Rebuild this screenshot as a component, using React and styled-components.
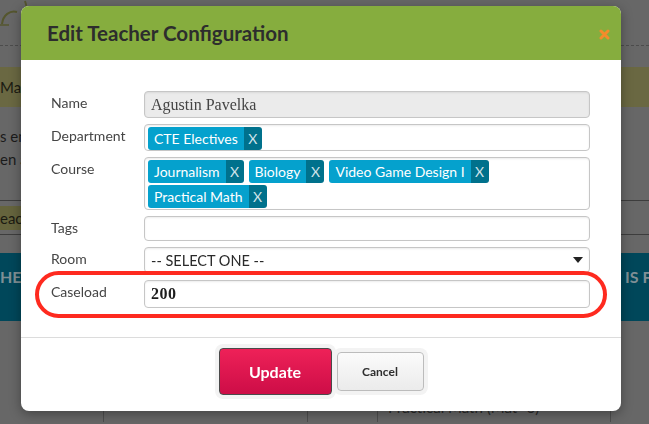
import React from "react";
import styled, { createGlobalStyle } from "styled-components";

const GlobalStyle = createGlobalStyle`
    body {
        margin: 0;
        background: #676767;
        font-family: Lato, "Liberation Sans", sans-serif;
        overflow: hidden;
    }
`

const courses = ["Journalism", "Biology", "Video Game Design I", "Practical Math"]

const Tag = ({ children }) => (
    <TagBox>
        <span className="txt">{children}</span>
        <span className="x">X</span>
    </TagBox>
)

const App = () => {
    return (
        <>
            <GlobalStyle />
            <Page>
                <TopBar>
                    <svg width="30" height="30" viewBox="0 0 30 30">
                        <path d="M2 24 C 3 15, 10 10, 17 12" fill="none" stroke="#55562e" strokeWidth="2" />
                        <path d="M25 1 C 27 6, 27 10, 25 15" fill="none" stroke="#55562e" strokeWidth="2" />
                        <path d="M0 25 L 9 25" fill="none" stroke="#55562e" strokeWidth="1.5" />
                    </svg>
                </TopBar>
                <OliveBand>Mast</OliveBand>
                <Para>s en</Para>
                <Para>en a</Para>
                <ToolRow>
                    <OliveButton>each</OliveButton>
                </ToolRow>
                <TealBand>
                    <span>HER</span>
                    <span>IS F</span>
                </TealBand>
                <Table>
                    <div />
                    <div />
                    <div />
                    <div className="cell">Practical Math (Mat- 6)</div>
                    <div />
                </Table>
            </Page>

            <Modal>
                <Header>
                    <h2>Edit Teacher Configuration</h2>
                    <svg width="11" height="11" viewBox="0 0 11 11">
                        <path d="M2 2 L9 9 M9 2 L2 9" stroke="#f58b2b" strokeWidth="3" strokeLinecap="round" />
                    </svg>
                </Header>
                <Body>
                    <Row>
                        <Label>Name</Label>
                        <Field $h={27} $bg="#ebebeb">
                            <span className="serif">Agustin Pavelka</span>
                        </Field>
                    </Row>
                    <Row>
                        <Label>Department</Label>
                        <TagField $h={27}>
                            <Tag>CTE Electives</Tag>
                        </TagField>
                    </Row>
                    <Row>
                        <Label>Course</Label>
                        <TagField $h={53}>
                            {courses.map(c => <Tag key={c}>{c}</Tag>)}
                        </TagField>
                    </Row>
                    <Row>
                        <Label>Tags</Label>
                        <Field $h={25} />
                    </Row>
                    <Row>
                        <Label>Room</Label>
                        <Select $h={26}>
                            <span>-- SELECT ONE --</span>
                            <svg width="10" height="6" viewBox="0 0 10 6">
                                <path d="M0 0 L10 0 L5 6 Z" fill="#222" />
                            </svg>
                        </Select>
                    </Row>
                    <Highlight>
                        <Label>Caseload</Label>
                        <Field $h={28}>
                            <span className="num">200</span>
                        </Field>
                    </Highlight>
                </Body>
                <Footer>
                    <UpdateButton>Update</UpdateButton>
                    <CancelButton>Cancel</CancelButton>
                </Footer>
            </Modal>
        </>
    )
}

const Page = styled.div`
    width: 649px;
    height: 424px;
    color: #1e1e1e;
    font-size: 14px;
`

const TopBar = styled.div`
    height: 46px;
    border-bottom: 1px dashed #4c4c4c;
    box-sizing: border-box;
    svg {
        display: block;
    }
`

const OliveBand = styled.div`
    margin-top: 21px;
    height: 40px;
    background: #6a6842;
    display: flex;
    align-items: center;
    font-size: 15px;
    color: #1b1b12;
`

const Para = styled.div`
    line-height: 15px;
    font-size: 15px;
    color: #1b1b1b;
    margin-top: 8px;
    ${OliveBand} + & {
        margin-top: 22px;
    }
`

const ToolRow = styled.div`
    margin-top: 33px;
    height: 35px;
    border-top: 1px solid #3d3d3d;
    border-bottom: 1px solid #3d3d3d;
    box-sizing: border-box;
    display: flex;
    align-items: center;
`

const OliveButton = styled.div`
    height: 24px;
    width: 60px;
    background: #65643d;
    display: flex;
    align-items: center;
    font-size: 15px;
    color: #1b1b12;
`

const TealBand = styled.div`
    margin-top: 18px;
    height: 68px;
    background: #00475a;
    display: grid;
    grid-template-columns: 625px 1fr;
    align-items: start;
    padding-top: 14px;
    box-sizing: border-box;
    font-weight: 700;
    font-size: 16px;
    color: #7f8f95;
    white-space: nowrap;
`

const Table = styled.div`
    height: 101px;
    display: grid;
    grid-template-columns: 103px 204px 70px 233px 1fr;
    div {
        border-left: 1px solid #4e4e4e;
    }
    div:first-child {
        border-left: none;
    }
    .cell {
        display: flex;
        align-items: flex-end;
        padding: 0 0 6px 10px;
        font-size: 15px;
        color: #2a2a2a;
        white-space: nowrap;
    }
`

const Modal = styled.div`
    position: fixed;
    top: 6px;
    left: 21px;
    width: 600px;
    background: #fff;
    border-radius: 8px;
    overflow: hidden;
    box-shadow: 0 3px 12px rgba(0, 0, 0, 0.35);
`

const Header = styled.div`
    height: 54px;
    background: #86ad3e;
    display: flex;
    align-items: center;
    justify-content: space-between;
    padding: 0 11px 0 26px;
    h2 {
        margin: 0;
        font-size: 20.5px;
        font-weight: 700;
        color: #2d2d2d;
    }
    svg {
        margin-top: 2px;
    }
`

const Body = styled.div`
    padding: 31px 31px 19px 30px;
    display: flex;
    flex-direction: column;
    gap: 6px;
`

const Row = styled.div`
    display: grid;
    grid-template-columns: 93px 1fr;
    align-items: start;
`

const Label = styled.div`
    font-size: 14px;
    line-height: 23px;
    color: #454545;
`

const Field = styled.div`
    height: ${p => p.$h}px;
    box-sizing: border-box;
    border: 1px solid #c6c6c6;
    border-radius: 4px;
    background: ${p => p.$bg || "#fff"};
    box-shadow: inset 0 1px 2px rgba(0, 0, 0, 0.08);
    display: flex;
    align-items: center;
    padding: 0 6px;
    .serif {
        font-family: "Liberation Serif", serif;
        font-size: 16px;
        color: #444;
    }
    .num {
        font-family: "Liberation Serif", serif;
        font-weight: 700;
        font-size: 16px;
        color: #1d1d1d;
        letter-spacing: 0.5px;
    }
`

const TagField = styled(Field)`
    align-items: flex-start;
    align-content: flex-start;
    flex-wrap: wrap;
    gap: 2px 5px;
    padding: 2px 3px;
`

const TagBox = styled.div`
    height: 23px;
    display: flex;
    border-radius: 3px;
    overflow: hidden;
    font-size: 14px;
    color: #fff;
    .txt {
        background: #05a1cd;
        padding: 0 6px;
        line-height: 23px;
    }
    .x {
        width: 18px;
        background: #00718c;
        color: #cfe3ea;
        text-align: center;
        line-height: 23px;
    }
`

const Select = styled(Field)`
    justify-content: space-between;
    font-size: 14.5px;
    color: #2a2a2a;
`

const Highlight = styled.div`
    display: grid;
    grid-template-columns: 93px 1fr;
    align-items: start;
    margin: -8px -17px 0 -16px;
    padding: 5px 13px 6px 12px;
    border: 4px solid #fe2a1f;
    border-radius: 24px;
`

const Footer = styled.div`
    border-top: 1px solid #dcdcdc;
    padding: 10px 0 16px;
    display: flex;
    justify-content: center;
    align-items: center;
    gap: 5px;
`

const UpdateButton = styled.button`
    width: 113px;
    height: 47px;
    border: 1px solid #4a4a4a;
    border-radius: 4px;
    background: linear-gradient(#ee2158, #cd0d47);
    box-shadow: 0 0 0 4px #f3f3f3;
    color: #fff;
    font-family: Lato, sans-serif;
    font-weight: 700;
    font-size: 16px;
`

const CancelButton = styled.button`
    width: 87px;
    height: 39px;
    border: 1px solid #bcbcbc;
    border-radius: 4px;
    background: linear-gradient(#fbfbfb, #ebebeb);
    box-shadow: 0 0 0 4px #f3f3f3;
    color: #2e2e2e;
    font-family: Lato, sans-serif;
    font-weight: 700;
    font-size: 12px;
`

export default App
